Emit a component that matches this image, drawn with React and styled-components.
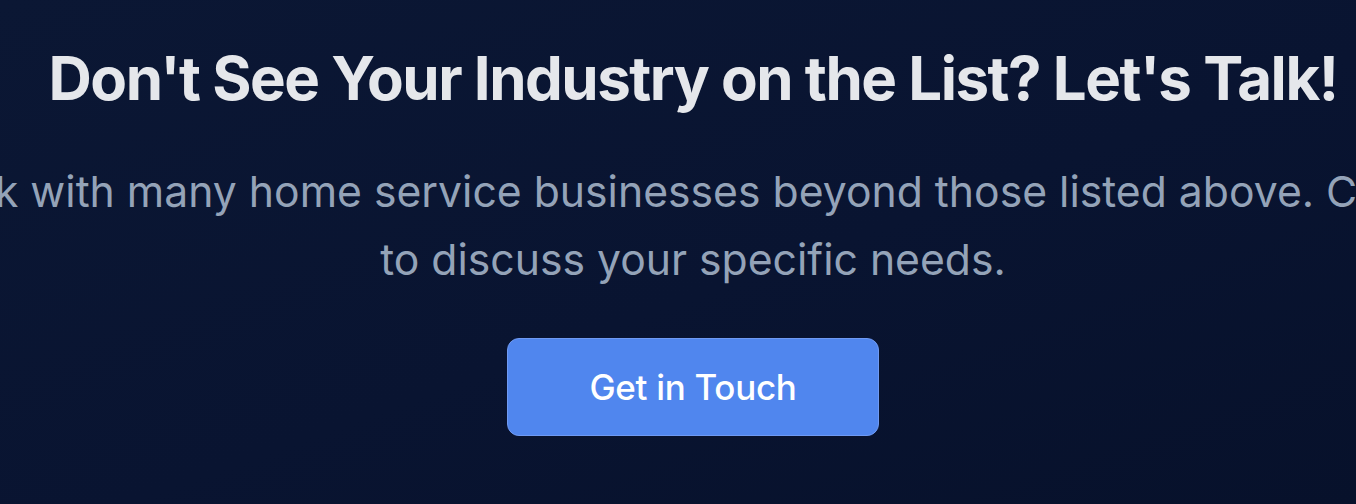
import React from "react";
import styled, { createGlobalStyle } from "styled-components";

const GlobalStyle = createGlobalStyle`
  html, body {
    margin: 0;
    padding: 0;
    background: #0a1531;
  }
  body {
    font-family: Inter, "Noto Sans", sans-serif;
    -webkit-font-smoothing: antialiased;
  }
`;

const Section = styled.section`
  width: 100%;
  height: 504px;
  box-sizing: border-box;
  padding: 42px 0 0 30px;
  overflow: hidden;
  background: linear-gradient(160deg, #0b1734 0%, #091431 55%, #07112b 100%);
  display: flex;
  flex-direction: column;
  align-items: center;
`;

const Heading = styled.h2`
  margin: 0;
  font-size: 60px;
  line-height: 72px;
  font-weight: 700;
  letter-spacing: -1.5px;
  color: #e5e7eb;
  white-space: nowrap;
  text-align: center;
`;

const Lead = styled.p`
  margin: 44px 0 0;
  width: 1720px;
  flex-shrink: 0;
  font-size: 42.7px;
  line-height: 68px;
  font-weight: 400;
  color: #94a3b8;
  text-align: center;
`;

const Button = styled.a`
  margin-top: 44px;
  display: inline-block;
  padding: 24px 81px;
  font-size: 35px;
  line-height: 48px;
  font-weight: 500;
  letter-spacing: -0.3px;
  color: #ffffff;
  text-decoration: none;
  background: #5086ee;
  border: 1px solid #6f9af3;
  border-radius: 12px;
  cursor: pointer;
`;

export default function App() {
  return (
    <>
      <GlobalStyle />
      <Section>
        <Heading>Don't See Your Industry on the List? Let's Talk!</Heading>
        <Lead>
          We work with many home service businesses beyond those listed above.
          Contact us to discuss your specific needs.
        </Lead>
        <Button href="#contact">Get in Touch</Button>
      </Section>
    </>
  );
}
